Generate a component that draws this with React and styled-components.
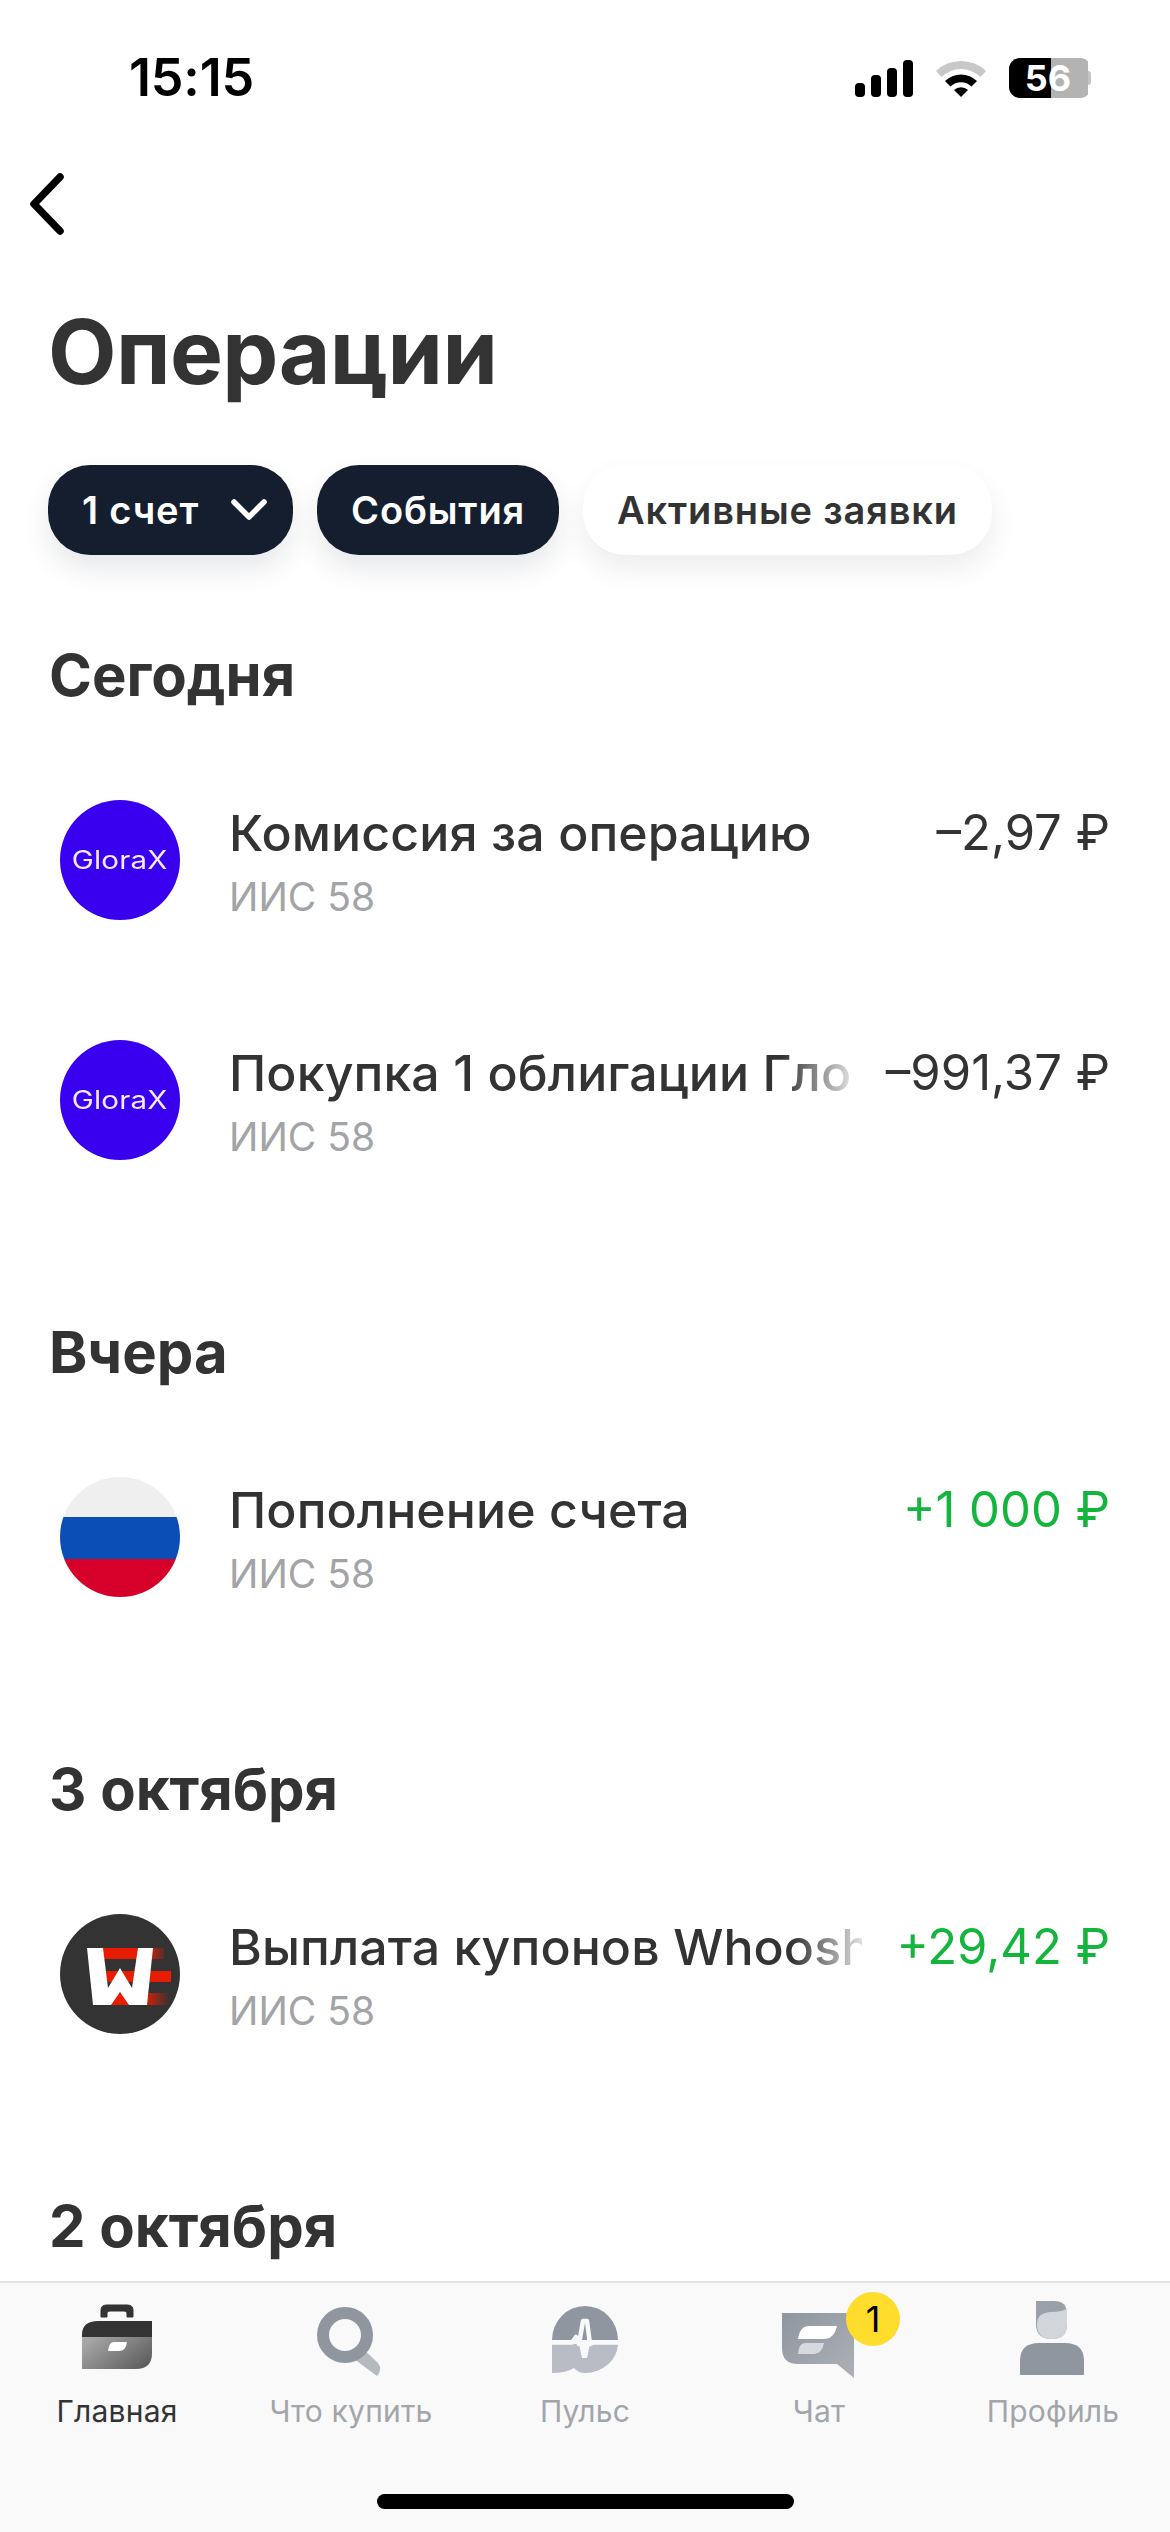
import React from "react";
import styled, { createGlobalStyle } from "styled-components";

const Global = createGlobalStyle`
  html, body { margin: 0; padding: 0; background: #fff; }
  body { font-family: Inter, "Noto Sans", sans-serif; color: #333; }
  * { box-sizing: border-box; }
`;

const Screen = styled.div`
  width: 1170px; height: 2532px; display: flex; flex-direction: column; overflow: hidden; background: #fff;
`;
const StatusBar = styled.div`
  height: 150px; flex: none; display: flex; align-items: center; justify-content: space-between;
  padding: 6px 79px 0 129px;
`;
const Time = styled.div`
  font-size: 52px; font-weight: 600; color: #000; letter-spacing: -0.2px; line-height: 1;
`;
const StatusIcons = styled.div`display: flex; align-items: center; gap: 23px;`;
const Battery = styled.div`
  position: relative; width: 82px; height: 40px; display: flex; align-items: center; justify-content: center;
  border-radius: 11px; margin-right: 0;
  background: linear-gradient(90deg, #000 0 42px, #b3b3b3 42px 79px, transparent 79px);
  color: #fff; font-size: 36px; font-weight: 700; padding-right: 4px;
  &::after {
    content: ""; position: absolute; right: 0; top: 13px; width: 3px; height: 14px;
    background: #c4c4c4; border-radius: 0 3px 3px 0;
  }
`;
const Back = styled.div`height: 90px; flex: none; padding: 21px 0 0 24px;`;
const Title = styled.h1`
  margin: 62px 0 0 48px; font-size: 89px; line-height: 100px; font-weight: 700; color: #333; letter-spacing: -0.6px;
`;
const Pills = styled.div`display: flex; gap: 24px; padding: 63px 0 0 48px; flex: none;`;
const Pill = styled.div`
  height: 90px; padding: 0 ${p => (p.$tight ? "26px" : "34px")} 0 34px; border-radius: 42px;
  display: flex; align-items: center; gap: 32px;
  font-size: 38px; font-weight: 600; letter-spacing: 0.85px;
  background: ${p => (p.$active ? "#141e2e" : "#fff")};
  color: ${p => (p.$active ? "#fff" : "#333")};
  box-shadow: 0 14px 28px rgba(20, 30, 46, ${p => (p.$active ? 0.1 : 0.08)});
`;
const Feed = styled.div`flex: 1; min-height: 0; overflow: hidden; padding-top: 85px;`;
const Section = styled.section`margin-bottom: 97px;`;
const Heading = styled.h2`
  margin: 0 0 30px 49px; font-size: 58px; line-height: 70px; font-weight: 700; color: #333;
`;
const Row = styled.div`
  height: 240px; display: flex; align-items: center; padding: 0 60px 0 60px;
`;
const Avatar = styled.div`
  width: 120px; height: 120px; border-radius: 50%; flex: none; overflow: hidden;
  display: flex; align-items: center; justify-content: center; background: ${p => p.$bg};
`;
const GloraX = styled.span`
  color: #f4e9ff; font-size: 25px; font-weight: 400; display: block; transform: scaleX(1.18); letter-spacing: 0.2px;
`;
const Flag = styled.div`
  width: 100%; height: 100%;
  background: linear-gradient(180deg, #efefef 0 33%, #0a4eb5 33% 68%, #d7002a 68% 100%);
`;
const Info = styled.div`
  flex: 1; min-width: 0; margin-left: 49px; padding-top: 6px; display: flex; flex-direction: column; gap: 8px;
`;
const Name = styled.div`
  font-size: 50px; line-height: 60px; font-weight: 550; color: #333; white-space: nowrap; overflow: hidden;
  letter-spacing: 0.1px;
  ${p => p.$fade && "mask-image: linear-gradient(90deg, #000 calc(100% - 70px), rgba(0,0,0,0.15) 100%);"}
`;
const Sub = styled.div`font-size: 39px; line-height: 52px; color: #a2a4a7;`;
const Amount = styled.div`
  flex: none; align-self: flex-start; margin: 63px 0 0 34px; font-size: 49px; line-height: 60px; font-weight: 400;
  color: ${p => (p.$plus ? "#14b53c" : "#333")};
`;
const TabBar = styled.nav`
  flex: none; height: 251px; background: #f9f9f9; border-top: 2px solid #e4e4e4; position: relative;
  display: grid; grid-template-columns: repeat(5, 234px); padding-top: 15px; align-content: start;
`;
const Tab = styled.div`display: flex; flex-direction: column; align-items: center;`;
const TabIcon = styled.div`position: relative; width: 90px; height: 80px;`;
const Badge = styled.div`
  position: absolute; left: 72px; top: -6px; width: 54px; height: 54px; border-radius: 50%;
  background: #ffdd2d; color: #000; font-size: 36px; line-height: 54px; text-align: center; font-weight: 400;
`;
const TabLabel = styled.div`
  margin-top: 14px; font-size: 30px; line-height: 38px; letter-spacing: 0.2px;
  color: ${p => (p.$active ? "#333" : "#a2a5aa")};
`;
const HomeBar = styled.div`
  position: absolute; left: 377px; top: 211px; width: 417px; height: 15px; border-radius: 8px; background: #000;
`;

const Signal = () => (
  <svg width="58" height="38" viewBox="0 0 58 38">
    <rect x="0" y="24" width="10" height="14" rx="4" />
    <rect x="16" y="16" width="10" height="22" rx="4" />
    <rect x="32" y="9" width="10" height="29" rx="4" />
    <rect x="48" y="1" width="10" height="37" rx="4" />
  </svg>
);
const Wifi = () => (
  <svg width="50" height="38" viewBox="0 0 50 38">
    <path d="M0 12 A36 36 0 0 1 50 12 L44.5 18 A28 28 0 0 0 5.5 18 Z" fill="#c8c8c8" />
    <path d="M9 22 A23 23 0 0 1 41 22 L35.5 27.5 A15 15 0 0 0 14.5 27.5 Z" />
    <path d="M18 31 A10 10 0 0 1 32 31 L25 38 Z" />
  </svg>
);
const Chevron = () => (
  <svg width="44" height="66" viewBox="0 0 44 66" fill="none" stroke="#000" strokeWidth="7.5" strokeLinecap="round" strokeLinejoin="round">
    <path d="M36 6 L10 33 L36 60" />
  </svg>
);
const DownChevron = () => (
  <svg width="36" height="24" viewBox="0 0 36 24" fill="none" stroke="#fff" strokeWidth="5.5" strokeLinecap="round" strokeLinejoin="round">
    <path d="M3 4 L18 19 L33 4" />
  </svg>
);
const Whoosh = () => (
  <svg width="120" height="120" viewBox="0 0 120 120">
    <defs>
      <linearGradient id="fade" x1="0" y1="0" x2="1" y2="0">
        <stop offset="0" stopColor="#e81c00" /><stop offset="1" stopColor="#e81c00" stopOpacity="0" />
      </linearGradient>
    </defs>
    <rect width="120" height="120" fill="#333" />
    <path d="M35 34 H90 V45 H35Z M36 57 H111 V68 H36Z M40 79 H85 V91 H40Z" fill="#e81c00" />
    <path d="M88 34 H104 V45 H88Z M84 79 H110 V91 H84Z" fill="url(#fade)" />
    <path d="M27 34 H43 L48 74 L60 54 L72 74 L78 34 H93 L87 91 H69 L60 78 L51 91 H33 Z" fill="#fff" />
  </svg>
);
const P = ({ children }) => <svg width="90" height="80" viewBox="0 0 90 80">{children}</svg>;

const HomeIcon = () => (
  <P>
    <defs>
      <linearGradient id="brief" x1="0" y1="0.2" x2="1" y2="0.8">
        <stop offset="0" stopColor="#a8a8a8" /><stop offset="1" stopColor="#5c5c5c" />
      </linearGradient>
    </defs>
    <path d="M29 19 V12 Q29 7 35 7 H55 Q61 7 61 12 V19 H55 V15 Q55 13 52 13 H38 Q35 13 35 15 V19 Z" fill="#333" stroke="#333" strokeWidth="1" />
    <path d="M10 39 V37 Q10 23 26 23 H80 V39 Z" fill="#333" />
    <path d="M10 39 H80 V55 Q80 71 64 71 H10 Z" fill="url(#brief)" />
    <path d="M42 44 H55 Q54 53 47 53 H36 Q37 44 42 44 Z" fill="#fff" />
  </P>
);
const SearchIcon = () => (
  <P>
    <path d="M56 50 L72 65 Q77 71 71 78 L44 58 Z" fill="#b6b9bf" />
    <circle cx="39" cy="37" r="22" fill="none" stroke="#8f96a0" strokeWidth="12" />
  </P>
);
const PulseIcon = () => (
  <P>
    <path d="M12 42 A33 34 0 0 1 78 42 Z" fill="#8f96a0" />
    <path d="M12 46 H78 A33 30 0 0 1 45 75 Q38 75 34 70 Q26 75 12 75 Z" fill="#b9bcc4" />
    <path d="M10 44.5 H32 L36 39 L39 46 L43 23 H47 L50 46 L53 44.5 H80" fill="none" stroke="#f9f9f9" strokeWidth="4.5" strokeLinejoin="round" />
    <path d="M39 46 L42 60 H47 L50 46 Z" fill="#f9f9f9" />
  </P>
);
const ChatIcon = () => (
  <P>
    <defs>
      <linearGradient id="chat" x1="0" y1="0" x2="1" y2="1">
        <stop offset="0" stopColor="#8f96a0" /><stop offset="1" stopColor="#adb0b6" />
      </linearGradient>
    </defs>
    <path d="M8 15 H80 V80 L63 66 H24 Q8 66 8 50 Z" fill="url(#chat)" />
    <path d="M35 28 H63 Q60 41 50 41 H24 Q26 28 35 28 Z" fill="#fff" />
    <path d="M31 45 H50 Q48 56 40 56 H24 Q25 45 31 45 Z" fill="#d6d9dd" />
  </P>
);
const ProfileIcon = () => (
  <P>
    <path d="M12 77 V63 Q12 45 31 45 H57 Q76 45 76 63 V77 Z" fill="#8f96a0" />
    <path d="M28 3 H46 Q59 3 59 16 V26 Q59 41 44 41 Q28 41 28 26 Z" fill="#9aa0a8" />
    <path d="M59 10 V26 Q59 41 44 41 Q29 41 29 26 Q29 15 42 14 Q56 14 59 10 Z" fill="#d2d5d9" />
  </P>
);

const glorax = <Avatar $bg="#3900f0"><GloraX>GloraX</GloraX></Avatar>;
const sections = [
  { title: "Сегодня", rows: [
    { icon: glorax, name: "Комиссия за операцию", amount: "–2,97 ₽" },
    { icon: glorax, name: "Покупка 1 облигации ГлораИкс", amount: "–991,37 ₽", fade: true },
  ]},
  { title: "Вчера", rows: [
    { icon: <Avatar><Flag /></Avatar>, name: "Пополнение счета", amount: "+1 000 ₽", plus: true },
  ]},
  { title: "3 октября", rows: [
    { icon: <Avatar><Whoosh /></Avatar>, name: "Выплата купонов Whoosh 1P", amount: "+29,42 ₽", plus: true, fade: true },
  ]},
];
const tabs = [
  { label: "Главная", Icon: HomeIcon, active: true },
  { label: "Что купить", Icon: SearchIcon },
  { label: "Пульс", Icon: PulseIcon },
  { label: "Чат", Icon: ChatIcon, badge: "1" },
  { label: "Профиль", Icon: ProfileIcon },
];

export default function App() {
  return (
    <Screen>
      <Global />
      <StatusBar>
        <Time>15:15</Time>
        <StatusIcons>
          <Signal />
          <Wifi />
          <Battery>56</Battery>
        </StatusIcons>
      </StatusBar>
      <Back><Chevron /></Back>
      <Title>Операции</Title>
      <Pills>
        <Pill $active $tight>1 счет <DownChevron /></Pill>
        <Pill $active>События</Pill>
        <Pill>Активные заявки</Pill>
      </Pills>
      <Feed>
        {sections.map(s => (
          <Section key={s.title}>
            <Heading>{s.title}</Heading>
            {s.rows.map(r => (
              <Row key={r.name}>
                {r.icon}
                <Info>
                  <Name $fade={r.fade}>{r.name}</Name>
                  <Sub>ИИС 58</Sub>
                </Info>
                <Amount $plus={r.plus}>{r.amount}</Amount>
              </Row>
            ))}
          </Section>
        ))}
        <Section><Heading>2 октября</Heading></Section>
      </Feed>
      <TabBar>
        {tabs.map(({ label, Icon, active, badge }) => (
          <Tab key={label}>
            <TabIcon>
              <Icon />
              {badge && <Badge>{badge}</Badge>}
            </TabIcon>
            <TabLabel $active={active}>{label}</TabLabel>
          </Tab>
        ))}
        <HomeBar />
      </TabBar>
    </Screen>
  );
}
